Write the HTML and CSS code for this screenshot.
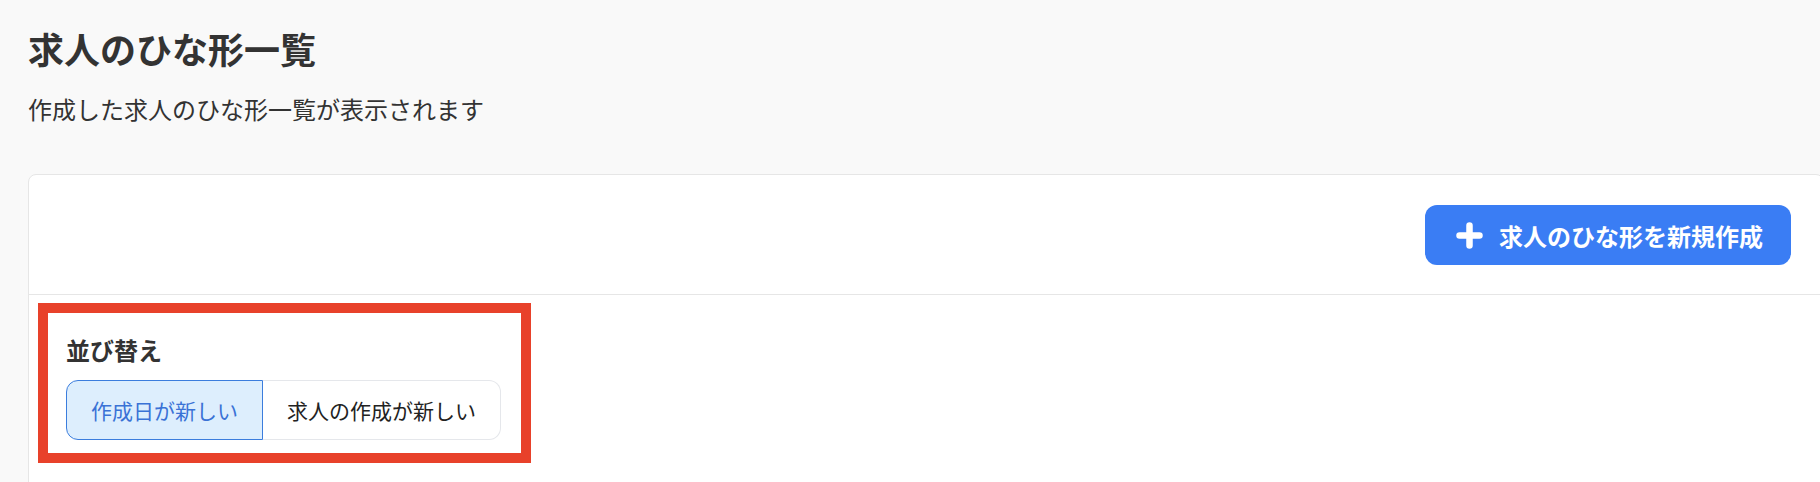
FILE: index.html
```html
<!DOCTYPE html>
<html lang="ja">
<head>
<meta charset="utf-8">
<title>求人のひな形一覧</title>
<link rel="stylesheet" href="styles.css">
</head>
<body>
<main class="page">
  <header class="page-header">
    <h1 class="page-title">求人のひな形一覧</h1>
    <p class="page-desc">作成した求人のひな形一覧が表示されます</p>
  </header>
  <section class="card">
    <div class="card-head">
      <button class="btn-primary" type="button">
        <svg class="btn-icon" viewBox="0 0 27 27" aria-hidden="true">
          <path d="M13.5 3.5V23.5M3.5 13.5H23.5" fill="none" stroke="#fff" stroke-width="6.5" stroke-linecap="round"/>
        </svg>
        <span>求人のひな形を新規作成</span>
      </button>
    </div>
    <div class="card-body">
      <div class="highlight">
        <div class="sort">
          <div class="sort-label">並び替え</div>
          <div class="segmented">
            <button class="seg seg-active" type="button">作成日が新しい</button>
            <button class="seg" type="button">求人の作成が新しい</button>
          </div>
        </div>
      </div>
    </div>
  </section>
</main>
</body>
</html>
```

FILE: styles.css
```css
html, body {
  margin: 0;
  padding: 0;
  overflow: hidden;
}
body {
  background: #f9f9f9;
  font-family: "Noto Sans CJK JP", "Noto Sans", sans-serif;
  color: #333333;
}
.page {
  padding: 23px 0 0 28px;
}
.page-header {
  display: flex;
  flex-direction: column;
}
.page-title {
  margin: 0;
  font-size: 36px;
  line-height: 50px;
  font-weight: 700;
  color: #333333;
}
.page-desc {
  margin: 18px 0 0;
  font-size: 24px;
  line-height: 36px;
  font-weight: 400;
  color: #333333;
}
.card {
  margin-top: 47px;
  margin-right: -4px;
  background: #ffffff;
  border: 1px solid #e6e6e6;
  border-radius: 8px;
}
.card-head {
  display: flex;
  justify-content: flex-end;
  padding: 30px 32px 29px 30px;
  border-bottom: 1px solid #e6e6e6;
}
.btn-primary {
  display: flex;
  align-items: center;
  gap: 16px;
  height: 60px;
  padding: 0 28px 0 31px;
  border: none;
  border-radius: 12px;
  background: #3a7df4;
  color: #ffffff;
  font-family: inherit;
  font-size: 24px;
  font-weight: 700;
  cursor: pointer;
}
.btn-icon {
  width: 27px;
  height: 27px;
  flex: none;
}
.card-body {
  padding: 8px 0 30px 9px;
}
.highlight {
  display: inline-flex;
  border: 10px solid #e8412a;
}
.sort {
  display: flex;
  flex-direction: column;
  gap: 14px;
  padding: 20px 20px 13px 18px;
}
.sort-label {
  font-size: 24px;
  line-height: 33px;
  font-weight: 700;
  color: #333333;
}
.segmented {
  display: flex;
}
.seg {
  height: 60px;
  padding: 0 24px;
  border: 1px solid #e5e7eb;
  background: #ffffff;
  color: #222222;
  font-family: inherit;
  font-size: 21px;
  font-weight: 400;
  cursor: pointer;
}
.seg:first-child {
  border-radius: 12px 0 0 12px;
}
.seg:last-child {
  border-radius: 0 12px 12px 0;
  border-left: none;
}
.seg-active {
  background: #ddeefd;
  border-color: #3b7ddd;
  color: #3a72d6;
}
```
